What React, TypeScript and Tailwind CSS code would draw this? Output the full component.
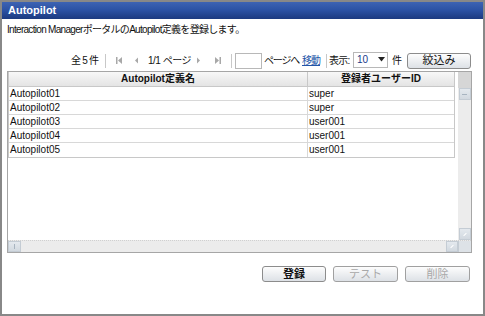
import React from "react";

const font = { fontFamily: '"Liberation Sans", "Noto Sans CJK JP", sans-serif' };

function Sep({ ml }: { ml: string }) {
  return <div className={`w-px h-[14px] bg-[#c8c8c8] shrink-0 ${ml}`} />;
}

function FirstIcon() {
  return (
    <svg width="9" height="9" viewBox="0 0 9 9" className="shrink-0 ml-[9px]">
      <rect x="1" y="1" width="1.5" height="7" fill="#a8a8a8" />
      <path d="M7 1 L3 4.5 L7 8 Z" fill="#a8a8a8" />
    </svg>
  );
}
function PrevIcon() {
  return (
    <svg width="7" height="9" viewBox="0 0 7 9" className="shrink-0 ml-[9px]">
      <path d="M5 1.5 L2 4.5 L5 7.5 Z" fill="#a8a8a8" />
    </svg>
  );
}
function NextIcon() {
  return (
    <svg width="7" height="9" viewBox="0 0 7 9" className="shrink-0 ml-[7px]">
      <path d="M2 1.5 L5 4.5 L2 7.5 Z" fill="#a8a8a8" />
    </svg>
  );
}
function LastIcon() {
  return (
    <svg width="9" height="9" viewBox="0 0 9 9" className="shrink-0 ml-[11px]">
      <path d="M2 1 L6 4.5 L2 8 Z" fill="#a8a8a8" />
      <rect x="6.5" y="1" width="1.5" height="7" fill="#a8a8a8" />
    </svg>
  );
}

function Btn({ label, disabled, bold, w }: { label: string; disabled?: boolean; bold?: boolean; w: string }) {
  return (
    <div
      className={`${w} h-[16px] shrink-0 rounded-[3px] border bg-gradient-to-b from-[#fdfdfd] to-[#dde1e6] flex items-center justify-center text-[11px] whitespace-nowrap ${
        disabled ? "text-[#a8a8a8] border-[#a0a0a0]" : "text-[#111] border-[#8c8c8c]"
      } ${bold ? "font-bold" : ""}`}
    >
      {label}
    </div>
  );
}

const rows = [
  ["Autopilot01", "super"],
  ["Autopilot02", "super"],
  ["Autopilot03", "user001"],
  ["Autopilot04", "user001"],
  ["Autopilot05", "user001"],
];

function ScrollBtn({ className, mark }: { className: string; mark: React.ReactNode }) {
  return (
    <div
      className={`${className} bg-gradient-to-b from-[#e4e9ee] to-[#d2d9e0] border border-[#c4ccd4] flex items-center justify-center`}
    >
      {mark}
    </div>
  );
}

export default function App() {
  return (
    <div style={font} className="w-[485px] h-[316px] bg-white border-2 border-[#888] flex flex-col text-[#111]">
      <div className="h-[17px] shrink-0 bg-gradient-to-b from-[#3d63b3] via-[#2b51a3] to-[#1c3a80] text-white font-bold text-[11px] flex items-center pl-[6px]">
        Autopilot
      </div>
      <div className="pl-[5px] flex flex-col">
        <div className="text-[10px] tracking-[-0.7px] mt-[4px] h-[14px] leading-[14px] whitespace-nowrap">
          Interaction ManagerポータルのAutopilot定義を登録します。
        </div>
        <div className="mt-[15px] h-[17px] flex items-center text-[10px] pl-[64px] whitespace-nowrap">
          <div className="w-[28px] flex justify-between shrink-0">
            <span>全</span>
            <span>5</span>
            <span>件</span>
          </div>
          <Sep ml="ml-[6px]" />
          <FirstIcon />
          <PrevIcon />
          <span className="ml-[8px] w-[40px] shrink-0 tracking-[-0.5px]">1/1 ページ</span>
          <NextIcon />
          <LastIcon />
          <Sep ml="ml-[9px]" />
          <div className="ml-[3px] w-[27px] h-[16px] shrink-0 border border-[#b8b8b8] bg-white" />
          <span className="ml-[2px] w-[34px] shrink-0 tracking-[-1.2px]">ページへ</span>
          <span className="ml-[4px] w-[18px] shrink-0 text-[#2255a8] underline tracking-[-1px]">移動</span>
          <Sep ml="ml-[6px]" />
          <span className="ml-[2px] w-[21px] shrink-0 tracking-[-0.8px]">表示:</span>
          <div className="ml-[3px] w-[35px] h-[16px] shrink-0 border border-[#b8b8b8] bg-white flex items-center justify-between pl-[3px] pr-[2px] -mt-[2px]">
            <span className="text-[#1a3a8a] text-[10px]">10</span>
            <svg width="7" height="5" viewBox="0 0 7 5">
              <path d="M0 0 L7 0 L3.5 4.5 Z" fill="#222" />
            </svg>
          </div>
          <span className="ml-[4px] w-[10px] shrink-0">件</span>
          <div className="ml-[5px] shrink-0">
            <Btn label="絞込み" w="w-[64px]" />
          </div>
        </div>
        <div className="mt-[2px] w-[465px] h-[182px] border border-[#a6a6a6] flex flex-col">
          <div className="flex flex-1 min-h-0">
            <div className="w-[450px] bg-white">
              <div className="w-[447px] border border-[#c8c8c8] border-t-0">
                <div className="flex h-[15px] bg-gradient-to-b from-[#f8f8f8] to-[#e4e4e4] border-b border-[#c8c8c8] text-[10px] font-bold items-center">
                  <div className="w-[299px] text-center border-r border-[#c8c8c8] h-full leading-[14px]">Autopilot定義名</div>
                  <div className="flex-1 text-center leading-[14px]">登録者ユーザーID</div>
                </div>
                {rows.map((r, i) => (
                  <div key={i} className={`flex h-[14px] text-[10px] items-center ${i < rows.length - 1 ? "border-b border-[#d8d8d8]" : ""}`}>
                    <div className="w-[299px] pl-[1px] border-r border-[#d8d8d8] h-full leading-[14px]">{r[0]}</div>
                    <div className="flex-1 pl-[1px] leading-[14px]">{r[1]}</div>
                  </div>
                ))}
              </div>
            </div>
            <div className="w-[13px] bg-[#ececec] flex flex-col">
              <div className="h-[16px] bg-[#d6d6d6]" />
              <ScrollBtn
                className="h-[12px] w-[12px] mx-auto"
                mark={<div className="w-[5px] h-px bg-[#a8b4c0]" />}
              />
              <div className="flex-1" />
              <ScrollBtn
                className="h-[12px] w-[12px] mx-auto"
                mark={<div className="w-[4px] h-px bg-white -rotate-45" />}
              />
            </div>
          </div>
          <div className="h-[12px] flex bg-[#ececec] border-t border-dotted border-[#d0d0d0]">
            <ScrollBtn className="w-[13px] h-full" mark={<div className="w-px h-[5px] bg-[#a8b4c0]" />} />
            <div className="flex-1" />
            <ScrollBtn className="w-[12px] h-full" mark={<div className="w-[4px] h-px bg-white -rotate-45" />} />
            <div className="w-[13px] h-full bg-[#dde2e7] border-l border-[#c4ccd4]" />
          </div>
        </div>
        <div className="mt-[13px] flex gap-[7px] pl-[255px]">
          <Btn label="登録" w="w-[64px]" bold />
          <Btn label="テスト" w="w-[65px]" disabled />
          <Btn label="削除" w="w-[65px]" disabled />
        </div>
      </div>
    </div>
  );
}
